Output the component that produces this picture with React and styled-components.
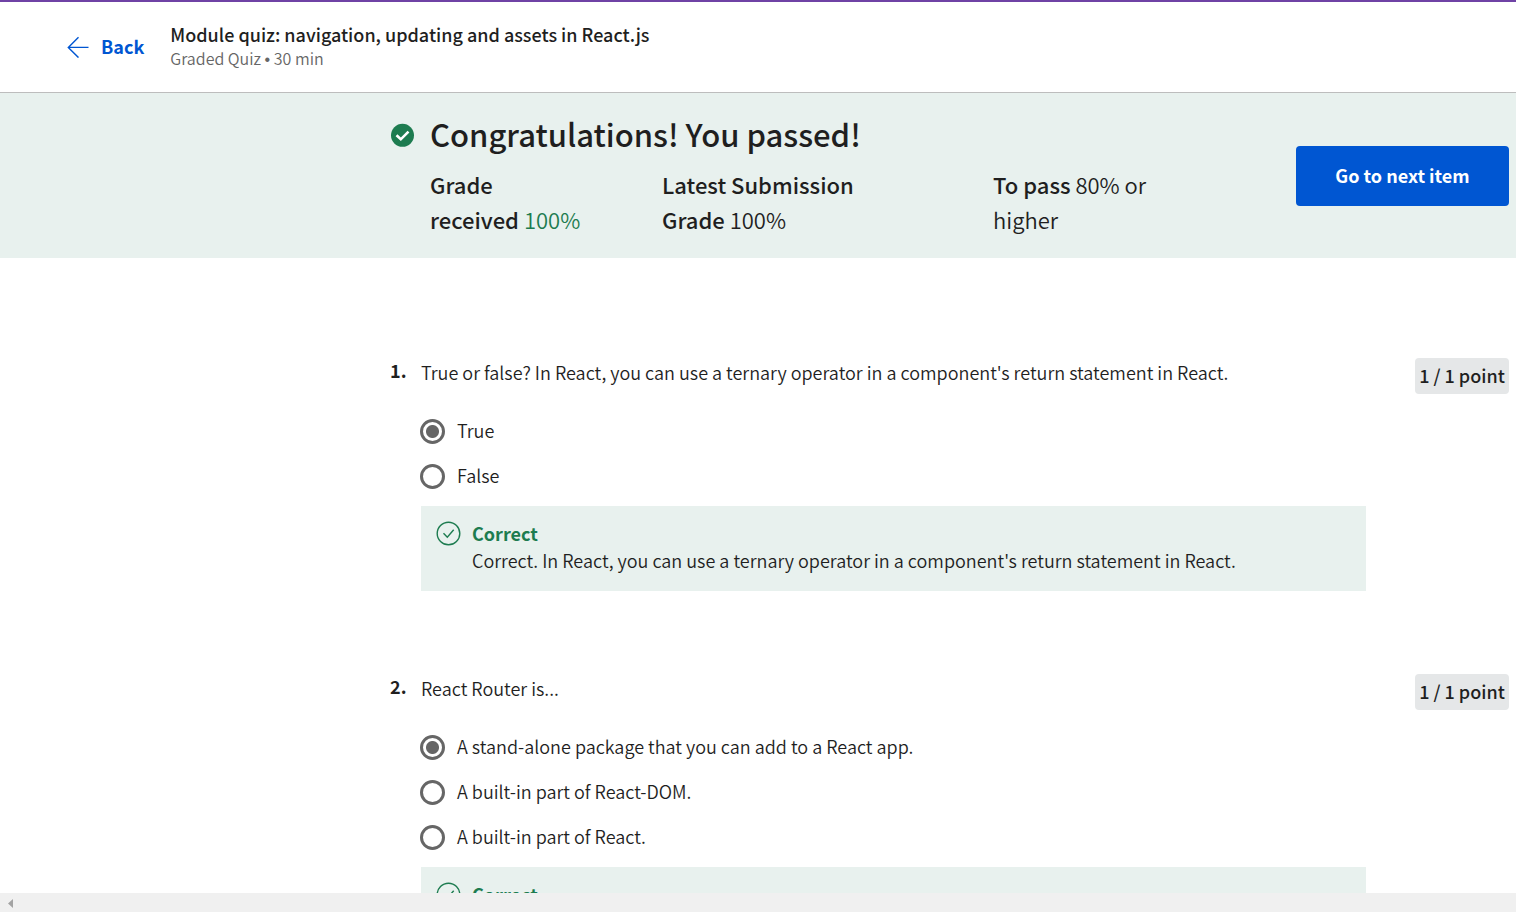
import React from "react";
import styled, { createGlobalStyle } from "styled-components";

const GlobalStyle = createGlobalStyle`
  * { box-sizing: border-box; }
  body {
    margin: 0;
    background: #fff;
    color: #1f1f1f;
    font-family: "Source Sans Pro", "Noto Sans CJK SC", sans-serif;
    font-size: 18px;
    line-height: 28px;
  }
  h1, h2, p, ol, dl, dd { margin: 0; padding: 0; }
`;

const Page = styled.div`
  display: flex;
  flex-direction: column;
  height: 100vh;
  overflow: hidden;
`;

const Header = styled.header`
  display: flex;
  flex: none;
  align-items: center;
  gap: 26px;
  height: 93px;
  padding: 0 66px 2px;
  border-top: 2px solid #6f42a5;
  border-bottom: 1px solid #bdbdbd;
`;

const BackLink = styled.a`
  display: flex;
  align-items: center;
  gap: 11px;
  color: #0056d2;
  font-weight: 700;
  text-decoration: none;
`;

const ModuleTitle = styled.h1`
  font-size: 18px;
  font-weight: 500;
  line-height: 24px;
`;

const ModuleMeta = styled.p`
  color: #666;
  font-size: 16px;
  font-weight: 350;
  line-height: 24px;
`;

const Bullet = styled.span`
  font-family: "Liberation Sans", sans-serif;
  font-size: 16px;
  line-height: 1;
`;

const Banner = styled.section`
  display: flex;
  flex: none;
  align-items: center;
  justify-content: space-between;
  gap: 24px;
  height: 165px;
  padding: 0 7px 0 390px;
  background: #e8f1ee;
`;

const Result = styled.div`
  display: grid;
  flex: 1;
  grid-template-columns: 24px 1fr;
  column-gap: 16px;
  row-gap: 8px;
  align-items: center;
  padding-bottom: 4px;
`;

const ResultTitle = styled.h2`
  padding-bottom: 2px;
  font-size: 31px;
  font-weight: 500;
  line-height: 46px;
`;

const Grades = styled.dl`
  display: grid;
  grid-column: 2;
  grid-template-columns: 232px 331px 1fr;
  font-size: 22px;
  line-height: 35px;
`;

const Grade = styled.div`
  max-width: ${(p) => p.$width};
  dt, dd { display: inline; }
  dt { font-weight: 500; }
  dd { font-weight: 350; color: ${(p) => (p.$passed ? "#1d7c50" : "inherit")}; }
`;

const NextButton = styled.button`
  width: 213px;
  height: 60px;
  padding: 0 0 2px;
  border: 0;
  border-radius: 4px;
  background: #0056d2;
  color: #fff;
  font: inherit;
  font-weight: 700;
`;

const Questions = styled.main`
  display: flex;
  flex: 1;
  flex-direction: column;
  gap: 83px;
  min-height: 0;
  padding: 100px 7px 0 390px;
  overflow: hidden;
`;

const Question = styled.section`
  display: grid;
  flex: none;
  grid-template-columns: 31px 1fr 94px;
  align-items: start;
`;

const Number = styled.span`
  font-weight: 700;
  line-height: 24px;
`;

const Body = styled.fieldset`
  min-width: 0;
  margin: 0 49px 0 0;
  padding: 0;
  border: 0;
`;

const Prompt = styled.legend`
  margin-bottom: 23px;
  padding: 0;
  font-weight: 350;
  line-height: 28px;
`;

const Option = styled.label`
  display: flex;
  align-items: center;
  gap: 12px;
  height: 45px;
  font-weight: 350;
`;

const OptionText = styled.span`
  padding-bottom: 4px;
`;

const Radio = styled.input`
  appearance: none;
  width: 25px;
  height: 25px;
  margin: 0 0 0 -1px;
  border: 3px solid #666;
  border-radius: 50%;
  background: ${(p) =>
    p.defaultChecked ? "radial-gradient(circle, #666 6px, #fff 7px)" : "#fff"};
`;

const Points = styled.span`
  padding-bottom: 2px;
  border-radius: 4px;
  background: #e5e7e8;
  font-weight: 500;
  line-height: 34px;
  text-align: center;
  white-space: nowrap;
`;

const Feedback = styled.div`
  display: flex;
  gap: 10px;
  height: 85px;
  margin-top: 7px;
  padding: 14px 15px;
  background: #e8f1ee;
`;

const FeedbackTitle = styled.p`
  color: #1d7c50;
  font-weight: 700;
  line-height: 27px;
`;

const FeedbackText = styled.p`
  font-weight: 350;
  line-height: 27px;
`;

const ScrollTrack = styled.footer`
  display: flex;
  flex: none;
  align-items: center;
  height: 19px;
  padding: 2px 8px 0;
  background: #f0f0f0;
`;

const BackArrow = () => (
  <svg width="24" height="24" viewBox="0 0 24 24" fill="none" stroke="#0056d2" strokeWidth="1.4" aria-hidden="true">
    <path d="M12.5 3.2L2.3 13.4L12.5 23.6M2.3 13.4H22.5" />
  </svg>
);

const PassedIcon = () => (
  <svg width="24" height="24" viewBox="0 0 24 24" aria-hidden="true">
    <circle cx="12.5" cy="12.3" r="11.5" fill="#1d7c50" />
    <path d="M6.5 12.3L10.8 16.3L18.5 8.6" fill="none" stroke="#fff" strokeWidth="2.6" />
  </svg>
);

const CorrectIcon = () => (
  <svg width="26" height="27" viewBox="0 0 26 27" fill="none" stroke="#1d7c50" strokeWidth="1.4" aria-hidden="true">
    <circle cx="12.5" cy="13.5" r="11.3" />
    <path d="M7.5 13.3L11.3 17.3L17.7 9.7" />
  </svg>
);

const questions = [
  {
    prompt: "True or false? In React, you can use a ternary operator in a component's return statement in React.",
    options: ["True", "False"],
    feedback: "Correct. In React, you can use a ternary operator in a component's return statement in React.",
  },
  {
    prompt: "React Router is...",
    options: [
      "A stand-alone package that you can add to a React app.",
      "A built-in part of React-DOM.",
      "A built-in part of React.",
    ],
    feedback: "",
  },
];

export default function App() {
  return (
    <Page>
      <GlobalStyle />
      <Header>
        <BackLink href="#">
          <BackArrow />
          Back
        </BackLink>
        <div>
          <ModuleTitle>Module quiz: navigation, updating and assets in React.js</ModuleTitle>
          <ModuleMeta>
            Graded Quiz <Bullet>•</Bullet> 30 min
          </ModuleMeta>
        </div>
      </Header>
      <Banner>
        <Result>
          <PassedIcon />
          <ResultTitle>Congratulations! You passed!</ResultTitle>
          <Grades>
            <Grade $width="154px" $passed>
              <dt>Grade received</dt> <dd>100%</dd>
            </Grade>
            <Grade $width="240px">
              <dt>Latest Submission Grade</dt> <dd>100%</dd>
            </Grade>
            <Grade $width="180px">
              <dt>To pass</dt> <dd>80% or higher</dd>
            </Grade>
          </Grades>
        </Result>
        <NextButton type="button">Go to next item</NextButton>
      </Banner>
      <Questions>
        {questions.map((q, i) => (
          <Question key={q.prompt}>
            <Number>{i + 1}.</Number>
            <Body>
              <Prompt>{q.prompt}</Prompt>
              {q.options.map((option, n) => (
                <Option key={option}>
                  <Radio type="radio" name={`question-${i}`} defaultChecked={n === 0} />
                  <OptionText>{option}</OptionText>
                </Option>
              ))}
              <Feedback>
                <CorrectIcon />
                <div>
                  <FeedbackTitle>Correct</FeedbackTitle>
                  <FeedbackText>{q.feedback}</FeedbackText>
                </div>
              </Feedback>
            </Body>
            <Points>1 / 1 point</Points>
          </Question>
        ))}
      </Questions>
      <ScrollTrack>
        <svg width="5" height="9" viewBox="0 0 5 9" aria-hidden="true">
          <path d="M5 0V9L0 4.5Z" fill="#a3a3a3" />
        </svg>
      </ScrollTrack>
    </Page>
  );
}
